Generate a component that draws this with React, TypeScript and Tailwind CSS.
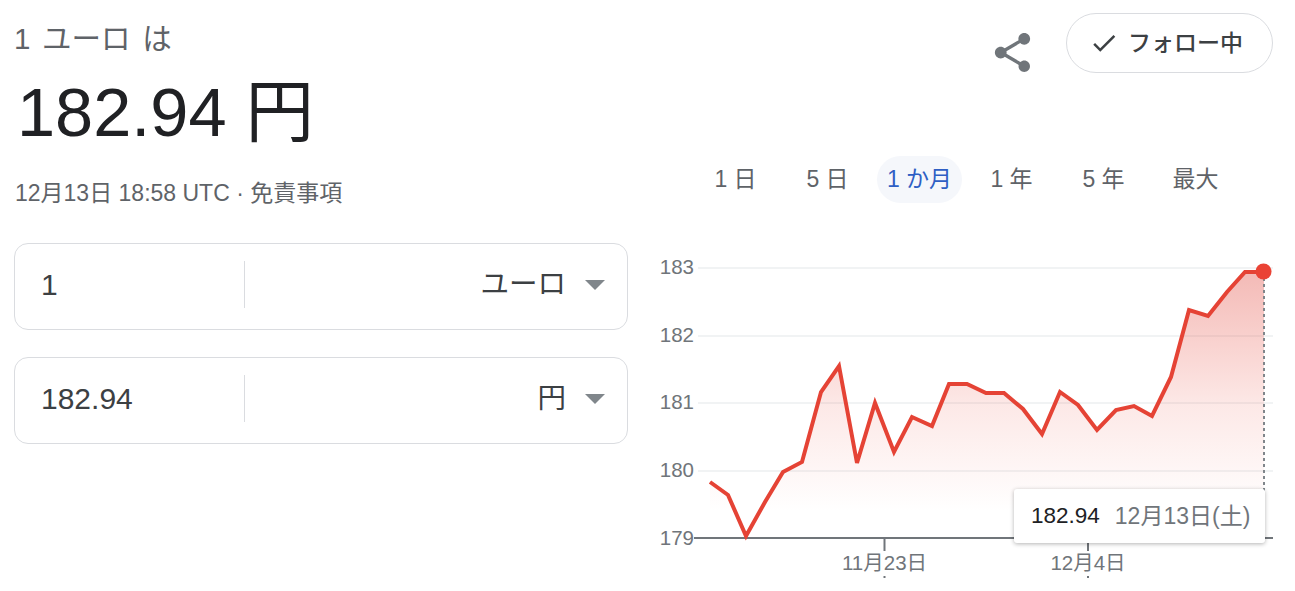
const FONT = "font-['Liberation_Sans','Noto_Sans_CJK_JP',sans-serif]";

const points: [number, number][] = [
  [710, 482], [728, 495], [746, 536], [765, 502], [783, 472], [802, 462], [821, 392], [839, 366],
  [857, 463], [875, 403], [894, 452], [912, 417], [932, 426], [949, 384], [967, 384], [986, 393],
  [1004, 393], [1023, 409], [1042, 434], [1060, 392], [1078, 405], [1097, 430], [1116, 410],
  [1134, 406], [1152, 416], [1171, 377], [1189, 310], [1208, 316], [1227, 292], [1245, 272], [1264, 272],
];

const linePath = points.map(([x, y]) => `${x},${y}`).join(" ");
const areaPath = `710,538 ${linePath} 1264,538`;

const yTicks = [
  { label: "183", y: 268 },
  { label: "182", y: 336 },
  { label: "181", y: 403 },
  { label: "180", y: 471 },
];

const ranges = ["1 日", "5 日", "1 か月", "1 年", "5 年", "最大"];

function ConverterRow({ value, unit }: { value: string; unit: string }) {
  return (
    <div className="flex h-[87px] w-[614px] items-center rounded-[14px] border border-[#dadce0] pb-[4px] pl-[26px] pr-[22px]">
      <div className="w-[203px] text-[30px] text-[#3c4043]">{value}</div>
      <div className="h-[47px] w-px bg-[#dadce0]" />
      <div className="flex flex-1 items-center justify-end gap-[19px]">
        <span className="text-[28.5px] leading-none text-[#3c4043]">{unit}</span>
        <span className="h-0 w-0 border-x-[10px] border-t-[10px] border-x-transparent border-t-[#80868b]" />
      </div>
    </div>
  );
}

function PriceChart() {
  return (
    <div className="relative h-[351px] w-[667px]">
      <svg viewBox="628 240 667 351" width="667" height="351" className="block">
        <defs>
          <linearGradient id="area" x1="0" y1="272" x2="0" y2="538" gradientUnits="userSpaceOnUse">
            <stop offset="0" stopColor="#e04a40" stopOpacity="0.38" />
            <stop offset="0.5" stopColor="#ea4335" stopOpacity="0.12" />
            <stop offset="0.9" stopColor="#ea4335" stopOpacity="0" />
          </linearGradient>
        </defs>
        {yTicks.map((t) => (
          <line key={t.label} x1="698" x2="1273" y1={t.y} y2={t.y} stroke="#f1f3f4" strokeWidth="2" />
        ))}
        <polygon points={areaPath} fill="url(#area)" />
        <line x1="694" x2="1273" y1="538" y2="538" stroke="#70757a" strokeWidth="2" />
        <line x1="884.5" x2="884.5" y1="538" y2="551" stroke="#70757a" strokeWidth="2" />
        <line x1="1088" x2="1088" y1="538" y2="551" stroke="#70757a" strokeWidth="2" />
        <line x1="884.5" x2="884.5" y1="576" y2="578" stroke="#70757a" strokeWidth="2" />
        <line x1="1088" x2="1088" y1="576" y2="578" stroke="#70757a" strokeWidth="2" />
        <line x1="1264" x2="1264" y1="272" y2="538" stroke="#80868b" strokeWidth="2" strokeDasharray="3 3" />
        <polyline points={linePath} fill="none" stroke="#e54335" strokeWidth="4" strokeLinejoin="miter" />
        <circle cx="1263.5" cy="271.5" r="8" fill="#ea4335" />
        <g fill="#70757a" fontSize="20.5" fontFamily="'Liberation Sans','Noto Sans CJK JP',sans-serif">
          {yTicks.map((t) => (
            <text key={t.label} x="694" y={t.y + 6} textAnchor="end">
              {t.label}
            </text>
          ))}
          <text x="694" y="545" textAnchor="end">179</text>
          <text x="884.5" y="570" textAnchor="middle">11月23日</text>
          <text x="1088" y="570" textAnchor="middle">12月4日</text>
        </g>
      </svg>
      <div className="absolute left-[386px] top-[249px] flex h-[54px] w-[251px] items-center gap-[15px] rounded-[3px] bg-white pl-[17px] shadow-[0_1px_4px_rgba(0,0,0,0.3)]">
        <span className="text-[22.5px] text-[#202124]">182.94</span>
        <span className="text-[23px] text-[#70757a]">12月13日(土)</span>
      </div>
    </div>
  );
}

export default function App() {
  return (
    <div className={`flex h-[591px] w-[1295px] overflow-hidden bg-white ${FONT}`}>
      <div className="w-[628px] shrink-0 pl-[14px]">
        <div className="pt-[21px] text-[29.5px] leading-[36px] text-[#5f6368] [word-spacing:3.5px]">1 ユーロ は</div>
        <div className="ml-[3px] mt-[11px] text-[68.5px] leading-[90px] text-[#202124]">182.94 円</div>
        <div className="ml-px mt-[19px] text-[23px] leading-[32px] text-[#5f6368]">12月13日 18:58 UTC · 免責事項</div>
        <div className="mt-[34px] flex flex-col gap-[27px]">
          <ConverterRow value="1" unit="ユーロ" />
          <ConverterRow value="182.94" unit="円" />
        </div>
      </div>
      <div className="flex flex-1 flex-col">
        <div className="flex items-start justify-end gap-[30px] pr-[22px] pt-[13px]">
          <svg width="47" height="47" viewBox="0 0 24 24" fill="#70757a" className="mt-[16px]">
            <path d="M18 16.08c-.76 0-1.44.3-1.96.77L8.91 12.7c.05-.23.09-.46.09-.7s-.04-.47-.09-.7l7.05-4.11c.54.5 1.25.81 2.04.81 1.66 0 3-1.34 3-3s-1.34-3-3-3-3 1.34-3 3c0 .24.04.47.09.7L8.04 9.81C7.5 9.31 6.79 9 6 9c-1.66 0-3 1.34-3 3s1.34 3 3 3c.79 0 1.5-.31 2.04-.81l7.12 4.16c-.05.21-.08.43-.08.65 0 1.61 1.31 2.92 2.92 2.92 1.61 0 2.92-1.31 2.92-2.92s-1.31-2.92-2.92-2.92z" />
          </svg>
          <button className="flex h-[60px] w-[207px] items-center gap-[9px] rounded-full border border-[#dadce0] pl-[22px] text-[23px] font-medium text-[#3c4043]">
            <svg width="30" height="30" viewBox="0 0 24 24" fill="#3c4043">
              <path d="M9 16.17L4.83 12l-1.42 1.41L9 19 21 7l-1.41-1.41z" />
            </svg>
            フォロー中
          </button>
        </div>
        <div className="mt-[80px] flex pl-[61.5px]">
          {ranges.map((r) => (
            <div key={r} className="flex w-[92px] justify-center">
              <div
                className={
                  r === "1 か月"
                    ? "flex h-[47px] w-[85px] items-center justify-center rounded-[24px] bg-[#f5f7fb] text-[23px] text-[#2f5fc4]"
                    : "flex h-[47px] w-[85px] items-center justify-center text-[23px] text-[#5f6368]"
                }
              >
                {r}
              </div>
            </div>
          ))}
        </div>
        <div className="mt-[37px]">
          <PriceChart />
        </div>
      </div>
    </div>
  );
}
